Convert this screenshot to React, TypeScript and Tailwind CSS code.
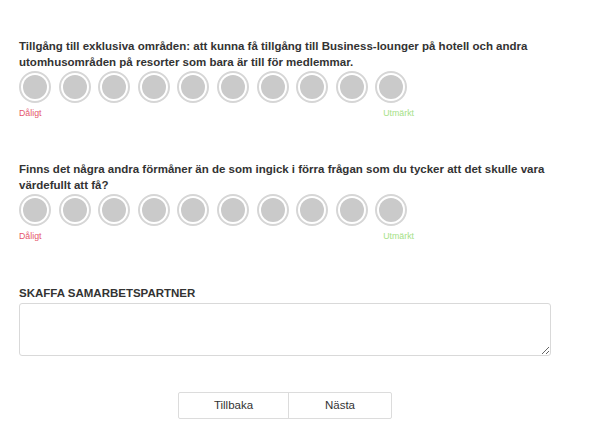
import React from "react";

function Circles() {
  return (
    <div className="mt-[1px] flex gap-[7.6px]">
      {Array.from({ length: 10 }).map((_, i) => (
        <div
          key={i}
          className="flex h-[32px] w-[32px] items-center justify-center rounded-full border-2 border-[#d6d6d6] bg-white"
        >
          <div className="h-[24px] w-[24px] rounded-full bg-[#cacaca]" />
        </div>
      ))}
    </div>
  );
}

function Labels() {
  return (
    <div className="mt-[4px] flex w-[395px] justify-between text-[8.8px] leading-[12px]">
      <span className="text-[#e5576b]">Dåligt</span>
      <span className="text-[#a5df86]">Utmärkt</span>
    </div>
  );
}

export default function App() {
  return (
    <div className="h-[441px] w-[600px] overflow-hidden bg-white font-['Liberation_Sans',Arial,sans-serif] text-[#333]">
      <div className="w-[551px] pl-[19px] pt-[38px]">
        <div>
          <p className="text-[11.5px] font-bold leading-[16px]">
            Tillgång till exklusiva områden: att kunna få tillgång till Business-lounger på hotell och andra
            <br />
            utomhusområden på resorter som bara är till för medlemmar.
          </p>
          <Circles />
          <Labels />
        </div>
        <div className="mt-[42px]">
          <p className="text-[11.5px] font-bold leading-[16px]">
            Finns det några andra förmåner än de som ingick i förra frågan som du tycker att det skulle vara
            <br />
            värdefullt att få?
          </p>
          <Circles />
          <Labels />
        </div>
        <div className="mt-[43px]">
          <p className="text-[11.5px] font-bold uppercase leading-[16px]">Skaffa samarbetspartner</p>
          <textarea className="mt-[2px] block h-[53px] w-[532px] rounded-[3px] border border-[#d9d9d9] bg-white" />
        </div>
        <div className="mt-[36px] flex w-[532px] justify-center">
          <div className="flex h-[27px] rounded-[2px] border border-[#dcdcdc] bg-white text-[11.5px]">
            <button className="w-[110px] border-r border-[#dcdcdc] text-center">Tillbaka</button>
            <button className="w-[102px] text-center">Nästa</button>
          </div>
        </div>
      </div>
    </div>
  );
}
